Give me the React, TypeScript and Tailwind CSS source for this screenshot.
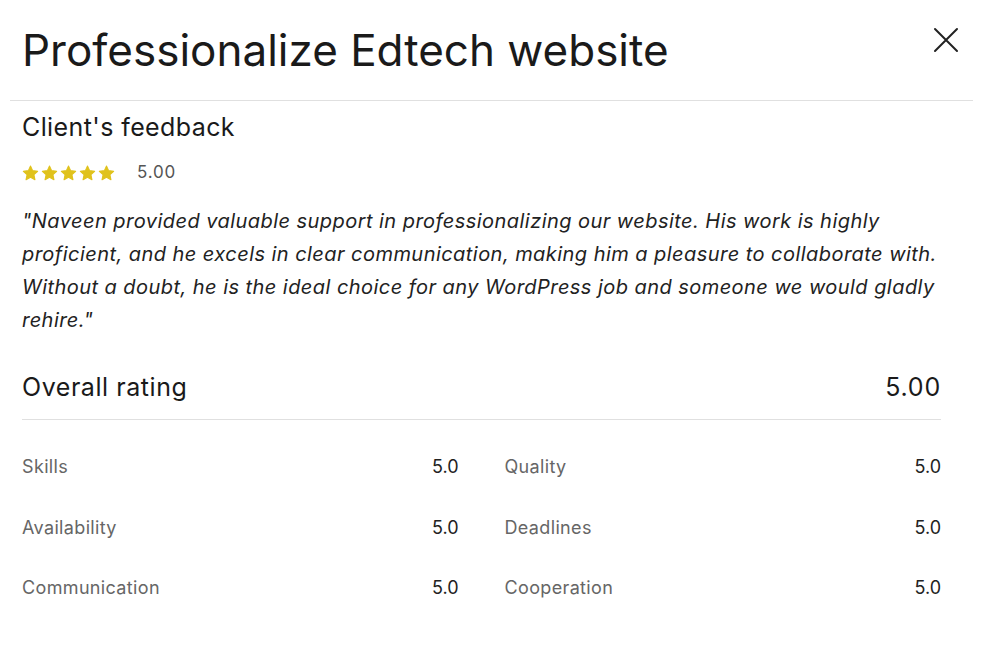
const metrics = [
  ["Skills", "5.0"],
  ["Quality", "5.0"],
  ["Availability", "5.0"],
  ["Deadlines", "5.0"],
  ["Communication", "5.0"],
  ["Cooperation", "5.0"],
]

function Star() {
  return (
    <svg width="17" height="16" viewBox="0 0 24 23" className="text-[#e0c21c]">
      <path
        fill="currentColor"
        stroke="currentColor"
        strokeWidth="1.5"
        strokeLinejoin="round"
        d="M12 1.5l3.1 6.6 7.2.9-5.3 5 1.4 7.1L12 17.6l-6.4 3.5 1.4-7.1-5.3-5 7.2-.9z"
      />
    </svg>
  )
}

export default function App() {
  return (
    <div className="w-[983px] h-[652px] bg-white font-['Inter',sans-serif] text-[#1a1a1a]">
      <div className="flex justify-between items-start pl-[22px] pr-[24px] pt-[24px] h-[100px]">
        <h1 className="text-[44px] leading-[52px]">Professionalize Edtech website</h1>
        <button className="mt-[3px] w-[26px] h-[26px] flex items-center justify-center">
          <svg width="26" height="26" viewBox="0 0 26 26" fill="none" stroke="#222" strokeWidth="2" strokeLinecap="round">
            <path d="M2 2l22 22M24 2L2 24" />
          </svg>
        </button>
      </div>
      <div className="mx-[10px] border-t border-[#e0e0e0]"></div>

      <div className="pl-[22px] pr-[42px]">
        <h2 className="mt-[10px] text-[25px] leading-[32px] tracking-[0.4px]">Client's feedback</h2>
        <div className="flex items-center mt-[20px] h-[20px]">
          <div className="flex gap-[2px]">
            {[1, 2, 3, 4, 5].map((i) => (
              <Star key={i} />
            ))}
          </div>
          <span className="ml-[22px] text-[17px] tracking-[0.8px] text-[#555]">5.00</span>
        </div>

        <p className="mt-[22px] italic text-[20px] leading-[33px] tracking-[0.45px] text-[#222]">
          "Naveen provided valuable support in professionalizing our website. His work is highly proficient, and he excels in clear communication, making him a pleasure to collaborate with. Without a doubt, he is the ideal choice for any WordPress job and someone we would gladly rehire."
        </p>

        <div className="mt-[33px] flex justify-between items-center pb-[15px] border-b border-[#e0e0e0]">
          <span className="text-[25px] leading-[34px] tracking-[0.55px]">Overall rating</span>
          <span className="text-[25px] leading-[34px] tracking-[0.8px]">5.00</span>
        </div>

        <div className="grid grid-cols-2 gap-x-[46px] mt-[24px]">
          {metrics.map(([label, value]) => (
            <div key={label} className="flex justify-between items-center h-[60.5px] pb-[25px] pt-[10px]">
              <span className="text-[18px] tracking-[0.35px] text-[#666]">{label}</span>
              <span className="text-[18px] text-[#222]">{value}</span>
            </div>
          ))}
        </div>
      </div>
    </div>
  )
}
